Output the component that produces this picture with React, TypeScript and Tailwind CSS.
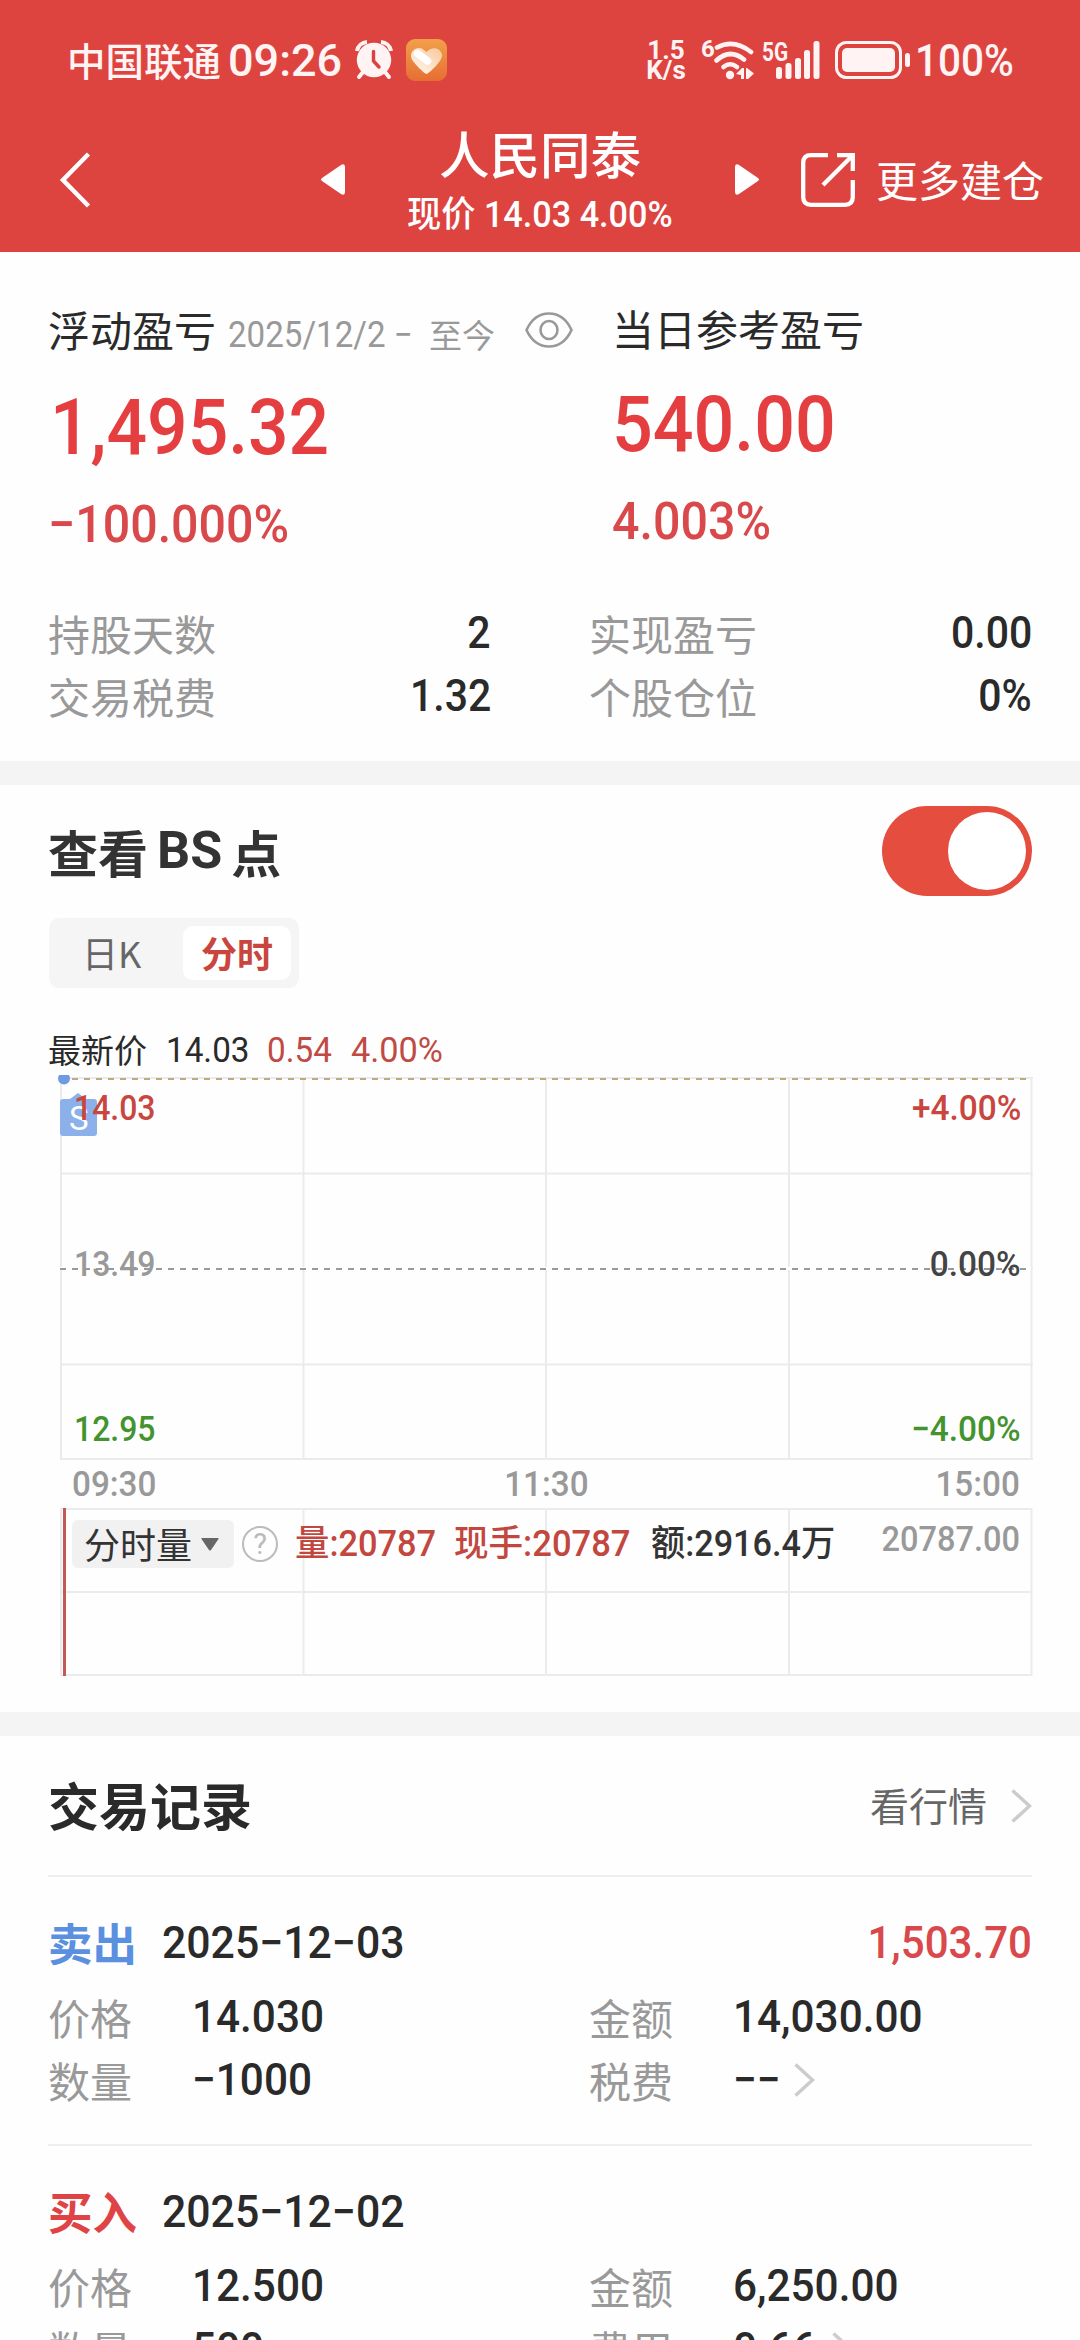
import React from "react";

type TextProps = { children: React.ReactNode; className?: string };

function Num({ children, className = "" }: TextProps) {
  return (
    <span
      className={`whitespace-nowrap font-['Roboto','Noto_Sans_CJK_SC',sans-serif] ${className}`}
    >
      {children}
    </span>
  );
}

function AlarmIcon() {
  return (
    <svg width="38" height="40" viewBox="0 0 38 40" fill="none">
      <path d="M2 11 A11 11 0 0 1 12 2 M36 11 A11 11 0 0 0 26 2" stroke="#fff3f3" strokeWidth="4" />
      <path d="M8 32 L4 37 M30 32 L34 37" stroke="#fff3f3" strokeWidth="4" strokeLinecap="round" />
      <circle cx="19" cy="20" r="17.2" fill="#fff3f3" />
      <path d="M18.5 11.5 V21 L24 27" stroke="#d9443f" strokeWidth="3.4" strokeLinecap="round" />
    </svg>
  );
}

function HeartBadge() {
  return (
    <svg width="41" height="42" viewBox="0 0 41 42">
      <defs>
        <linearGradient id="badge" x1="0" y1="0" x2="0" y2="1">
          <stop offset="0" stopColor="#f2a04a" />
          <stop offset="1" stopColor="#e66e33" />
        </linearGradient>
        <linearGradient id="heart" x1="0.2" y1="1" x2="0.9" y2="0.2">
          <stop offset="0" stopColor="#fff6ec" />
          <stop offset="1" stopColor="#f9cfa6" />
        </linearGradient>
      </defs>
      <rect width="41" height="42" rx="9" fill="url(#badge)" />
      <path
        d="M20.500 35 C19 35 6.500 23.500 5.200 18.500 C3.500 11 12.500 6 18 11 L20.500 13 C26 6.500 35 9 36 16 C36.500 22.500 22 35 20.500 35Z"
        fill="url(#heart)"
      />
      <path d="M11.500 14.500 L21.500 22" stroke="#fff" strokeWidth="7.500" strokeLinecap="round" />
    </svg>
  );
}

function WifiIcon() {
  return (
    <svg width="40" height="40" viewBox="0 0 40 40" fill="none">
      <g stroke="#fff3f3" strokeWidth="4.600" strokeLinecap="round">
        <path d="M3 7.500 Q20 -1.500 37 12" />
        <path d="M2.500 20.500 Q16 8 30 19.500" />
        <path d="M9.500 27 Q16 21.500 23 27" />
      </g>
      <circle cx="16" cy="35" r="4.200" fill="#fff3f3" />
      <path d="M22 34 L28 28 H30 V39 H27 V35Z M33 28 L40 33.500 L34 39 H32 V28Z" fill="#fff3f3" />
    </svg>
  );
}

function SignalIcon() {
  return (
    <svg width="46" height="40" viewBox="0 0 46 40" fill="#fff3f3">
      <rect x="0" y="27" width="6" height="12" rx="2.500" />
      <rect x="9.500" y="23" width="6" height="16" rx="2.500" />
      <rect x="19" y="18" width="6" height="21" rx="2.500" />
      <rect x="28" y="10" width="6" height="29" rx="2.500" />
      <rect x="37.500" y="1" width="6" height="38" rx="2.500" />
    </svg>
  );
}

function BatteryIcon() {
  return (
    <svg width="76" height="38" viewBox="0 0 76 38">
      <rect x="1.500" y="1.500" width="64" height="35" rx="10" fill="none" stroke="#fff3f3" strokeWidth="3" />
      <rect x="7" y="7" width="53" height="24" rx="5" fill="#fff3f3" />
      <rect x="70" y="12" width="5" height="14" rx="2.500" fill="#fff3f3" />
    </svg>
  );
}

function ExportIcon() {
  return (
    <svg width="54" height="54" viewBox="0 0 54 54" fill="none" stroke="#fff" strokeWidth="4.300">
      <path d="M27 2.200 H10 Q2.200 2.200 2.200 10 V44 Q2.200 51.800 10 51.800 H44 Q51.800 51.800 51.800 44 V27" />
      <path d="M36 2.200 H51.800 V18" />
      <path d="M51 3 L22 32" />
    </svg>
  );
}

function EyeIcon() {
  return (
    <svg width="48" height="36" viewBox="0 0 48 36" fill="none" stroke="#999" strokeWidth="2.600">
      <path d="M1.500 18 C7 6 16 1.500 24 1.500 S41 6 46.500 18 C41 30 32 34.500 24 34.500 S7 30 1.500 18Z" />
      <ellipse cx="24" cy="18" rx="8.500" ry="9" />
    </svg>
  );
}

function Chevron() {
  return (
    <svg width="21" height="36" viewBox="0 0 21 36" fill="none" stroke="#ccc" strokeWidth="3.500">
      <path d="M1.500 2.500 L18.500 18 L1.500 33.500" />
    </svg>
  );
}

function Stat({ label, value }: { label: string; value: string }) {
  return (
    <div className="flex h-[63px] items-center justify-between">
      <span className="text-[42px] leading-none text-[#999]">{label}</span>
      <Num className="origin-right scale-x-[.91] text-[45px] leading-none font-medium text-[#2a2a2a]">{value}</Num>
    </div>
  );
}

function Field({ label, value, arrow = false }: { label: string; value: string; arrow?: boolean }) {
  return (
    <div className="flex h-[63px] items-center">
      <span className="w-[144px] shrink-0 text-[42px] leading-none text-[#999]">{label}</span>
      <Num className="origin-left scale-x-[.94] text-[45px] leading-none font-medium text-[#2a2a2a]">{value}</Num>
      {arrow && (
        <span className="ml-[10px]">
          <Chevron />
        </span>
      )}
    </div>
  );
}

type Trade = {
  side: string;
  sideClass: string;
  date: string;
  profit?: string;
  fields: { label: string; value: string; arrow?: boolean }[];
};

const trades: Trade[] = [
  {
    side: "卖出",
    sideClass: "text-[#5b8fe0]",
    date: "2025−12−03",
    profit: "1,503.70",
    fields: [
      { label: "价格", value: "14.030" },
      { label: "金额", value: "14,030.00" },
      { label: "数量", value: "−1000" },
      { label: "税费", value: "−−", arrow: true },
    ],
  },
  {
    side: "买入",
    sideClass: "text-[#e04345]",
    date: "2025−12−02",
    fields: [
      { label: "价格", value: "12.500" },
      { label: "金额", value: "6,250.00" },
      { label: "数量", value: "500" },
      { label: "费用", value: "0.66", arrow: true },
    ],
  },
];

function TradeCard({ trade }: { trade: Trade }) {
  return (
    <article className="mx-12 h-[269px] shrink-0 border-t-2 border-[#eee] pt-[33px]">
      <div className="flex h-[64px] items-center">
        <span className={`w-[114px] text-[44.500px] leading-none font-bold ${trade.sideClass}`}>{trade.side}</span>
        <Num className="origin-left scale-x-[.95] text-[45px] leading-none font-medium text-[#2a2a2a]">{trade.date}</Num>
        {trade.profit && (
          <Num className="ml-auto origin-right scale-x-[.935] text-[45px] leading-none font-medium text-[#d9484a]">
            {trade.profit}
          </Num>
        )}
      </div>
      <div className="mt-[11px] grid grid-cols-[541px_1fr]">
        {trade.fields.map((f) => (
          <Field key={f.label} {...f} />
        ))}
      </div>
    </article>
  );
}

function PriceChart() {
  return (
    <div className="relative h-[384px] w-[972px]">
      <svg className="absolute inset-0" width="974" height="384" viewBox="0 0 974 384">
        <g stroke="#ebebeb" strokeWidth="2">
          <path d="M1 2 H973 M1 97.500 H973 M1 192.500 H973 M1 288.500 H973 M1 383 H973" />
          <path d="M1 1 V384 M243.500 1 V384 M486 1 V384 M729 1 V384 M971.500 1 V384" />
        </g>
        <path d="M0 192.500 H971" stroke="#fff" strokeWidth="3" />
        <path d="M0 193 H968" stroke="#999" strokeWidth="2" strokeDasharray="6 6" />
        <path d="M0 3 H968" stroke="#bfa77f" strokeWidth="2" strokeDasharray="6 6" />
        <path d="M10 23 L18 17 L26 23Z" fill="#8bb0ea" />
        <rect x="0" y="23" width="37" height="37" rx="3" fill="#8bb0ea" />
      </svg>
      <svg className="absolute -top-[1px] -left-[2px]" width="12" height="10" viewBox="0 0 12 10">
        <circle cx="6" cy="3.500" r="6" fill="#6f9be0" />
      </svg>
      <Num className="absolute top-[25px] left-[9px] text-[33px] leading-[35px] text-white">S</Num>
      <div className="absolute inset-0 text-[35.500px] leading-none font-medium">
        <Num className="absolute top-[15px] left-[14px] origin-left scale-x-[.9] text-[#c9463e]">14.03</Num>
        <Num className="absolute top-[15px] right-[11px] origin-right scale-x-[.94] text-[#c9463e]">+4.00%</Num>
        <Num className="absolute top-[171px] left-[14px] origin-left scale-x-[.9] text-[#999]">13.49</Num>
        <Num className="absolute top-[171px] right-[11px] origin-right scale-x-[.94] text-[#444]">0.00%</Num>
        <Num className="absolute top-[336px] left-[14px] origin-left scale-x-[.9] text-[#43942f]">12.95</Num>
        <Num className="absolute top-[336px] right-[11px] origin-right scale-x-[.94] text-[#43942f]">−4.00%</Num>
      </div>
    </div>
  );
}

function VolumeChart() {
  return (
    <div className="relative h-[168px] w-[972px]">
      <svg className="absolute inset-0" width="974" height="168" viewBox="0 0 974 168">
        <g stroke="#ebebeb" strokeWidth="2">
          <path d="M0 1 H972 M0 84 H972 M0 167 H972" />
          <path d="M1 0 V168 M243.500 0 V168 M486 0 V168 M729 0 V168 M971.500 0 V168" />
        </g>
        <path d="M4.500 0 V168" stroke="#c05a54" strokeWidth="3" />
      </svg>
      <div className="absolute inset-x-0 top-[12px] flex h-12 items-center pl-[12px] text-[36px] leading-none font-medium text-[#333]">
        <div className="flex h-12 w-[162px] shrink-0 items-center gap-[9px] rounded-md bg-[#f1f1f1] pl-[12px]">
          <span className="-mt-[3px] text-[36px] font-normal">分时量</span>
          <svg width="18" height="13" viewBox="0 0 18 13" fill="#666">
            <path d="M1 0 H17 Q18 0 17.500 1 L10 12 Q9 13 8 12 L.5 1 Q0 0 1 0Z" />
          </svg>
        </div>
        <span className="ml-[8px] flex size-[36px] shrink-0 items-center justify-center rounded-full border-[2.500px] border-[#bbb]">
          <Num className="text-[29px] font-normal text-[#bbb]">?</Num>
        </span>
        <Num className="ml-[17px] w-[159px] origin-left scale-x-[.955] text-[#c2473f]">量:20787</Num>
        <Num className="w-[197px] origin-left scale-x-[.96] text-[#c2473f]">现手:20787</Num>
        <Num className="origin-left scale-x-[.95]">额:2916.4万</Num>
      </div>
      <Num className="absolute top-[14px] right-[12px] origin-right scale-x-[.93] text-[35px] leading-none font-medium text-[#999]">
        20787.00
      </Num>
    </div>
  );
}

export default function App() {
  return (
    <div className="flex h-[2340px] w-[1080px] flex-col overflow-hidden bg-[#fefefe] font-['Noto_Sans_CJK_SC',sans-serif] text-[#2a2a2a]">
      <header className="h-[252px] shrink-0 bg-[#dd4440] text-white">
        <div className="flex h-[120px] items-center pl-[67px] leading-none text-[#fff3f3]">
          <span className="-mt-[2px] w-[161px] text-[38.500px] font-medium">中国联通</span>
          <Num className="w-[127px] text-[45px] font-medium">09:26</Num>
          <AlarmIcon />
          <span className="ml-[13px]">
            <HeartBadge />
          </span>
          <Num className="ml-[199px] w-[40px] text-center text-[26px] leading-[20px] font-bold">
            1.5
            <br />
            K/s
          </Num>
          <span className="ml-[15px] flex items-start">
            <Num className="-mt-[3px] w-[13px] origin-left text-[24px] font-bold">6</Num>
            <WifiIcon />
          </span>
          <span className="relative ml-[22px] flex">
            <SignalIcon />
            <Num className="absolute -top-[1px] -left-[14px] origin-left scale-x-[.8] text-[26px] font-bold">5G</Num>
          </span>
          <span className="ml-[13px]">
            <BatteryIcon />
          </span>
          <Num className="ml-[4px] origin-left scale-x-[.9] text-[45px] font-medium">100%</Num>
        </div>
        <div className="flex h-[120px] items-center pl-[59px]">
          <svg width="32" height="56" viewBox="0 0 32 56" fill="none" stroke="#fff" strokeWidth="4.500">
            <path d="M29.500 2 L4 28 L29.500 54" />
          </svg>
          <svg className="-mt-[2px] ml-[230px]" width="24" height="31" viewBox="0 0 24 31" fill="#fff">
            <path d="M1 14 L20 1 Q24 -1 24 3 V28 Q24 32 20 30 L1 17 Q-1 15.500 1 14Z" />
          </svg>
          <div className="flex w-[390px] flex-col items-center">
            <span className="mt-[7px] text-[50.500px] leading-[60px] font-medium">人民同泰</span>
            <Num className="mt-[3px] scale-x-[.95] text-[36px] leading-[60px] font-medium">现价 14.03 4.00%</Num>
          </div>
          <svg className="-mt-[2px]" width="24" height="31" viewBox="0 0 24 31" fill="#fff">
            <path d="M23 14 L4 1 Q0 -1 0 3 V28 Q0 32 4 30 L23 17 Q25 15.500 23 14Z" />
          </svg>
          <span className="ml-[42px]">
            <ExportIcon />
          </span>
          <span className="-mt-[2px] ml-[21px] text-[42px] leading-none">更多建仓</span>
        </div>
      </header>

      <section className="h-[509px] shrink-0 px-[48px] pt-[48px]">
        <div className="grid grid-cols-[564px_1fr]">
          <div className="flex flex-col items-start">
            <div className="flex h-[60px] items-center leading-none">
              <span className="-mt-[3px] w-[180px] text-[42px]">浮动盈亏</span>
              <span className="mt-[10px] flex w-[297px] items-center text-[#999]">
                <Num className="w-[201px] origin-left scale-x-[.92] text-[36px]">2025/12/2 −</Num>
                <span className="-mt-[2px] text-[33px]">至今</span>
              </span>
              <EyeIcon />
            </div>
            <Num className="mt-[30px] ml-[2px] origin-left scale-x-[.915] text-[78px] leading-[76px] font-medium text-[#e53e41]">
              1,495.32
            </Num>
            <Num className="mt-[29px] origin-left scale-x-[.93] text-[52px] leading-[60px] font-medium text-[#d9484a]">
              −100.000%
            </Num>
          </div>
          <div className="flex flex-col items-start">
            <div className="flex h-[58px] items-center leading-none">
              <span className="-mt-[3px] text-[42px]">当日参考盈亏</span>
            </div>
            <Num className="mt-[29px] origin-left scale-x-[.92] text-[78px] leading-[76px] font-medium text-[#e53e41]">
              540.00
            </Num>
            <Num className="mt-[29px] origin-left scale-x-[.93] text-[52px] leading-[60px] font-medium text-[#d9484a]">
              4.003%
            </Num>
          </div>
        </div>
        <div className="mt-[46px] grid grid-cols-[443px_443px] justify-between">
          <Stat label="持股天数" value="2" />
          <Stat label="实现盈亏" value="0.00" />
          <Stat label="交易税费" value="1.32" />
          <Stat label="个股仓位" value="0%" />
        </div>
      </section>

      <div className="h-[24px] shrink-0 bg-[#f4f4f4]" />

      <section className="h-[927px] shrink-0">
        <div className="flex h-[132px] items-center justify-between px-[48px]">
          <h2 className="-mt-[1px] flex items-center text-[50px] leading-none font-bold text-[#333]">
            查看
            <span className="mx-[9px] font-['Roboto',sans-serif] text-[52px]">BS</span>点
          </h2>
          <div className="flex h-[90px] w-[150px] items-center justify-end rounded-full bg-[#e54d3f] pr-[6px]">
            <div className="size-[78px] rounded-full bg-white" />
          </div>
        </div>
        <div className="mt-[1px] ml-[49px] flex h-[70px] w-[250px] items-center rounded-[10px] bg-[#f5f5f5] text-[36px] leading-none">
          <span className="-mt-[3px] w-[134px] pl-[33px] text-[#666]">日K</span>
          <span className="flex h-[54px] w-[108px] items-center justify-center rounded-[10px] bg-white pb-[3px] font-bold text-[#c9463e]">
            分时
          </span>
        </div>
        <div className="flex h-[88px] items-end pl-[48px] text-[35px] leading-[50px]">
          <span className="mb-[2px] w-[118px] text-[33px]">最新价</span>
          <Num className="w-[101px] origin-left scale-x-[.95]">14.03</Num>
          <Num className="w-[84px] origin-left scale-x-[.95] text-[#c04a44]">0.54</Num>
          <Num className="origin-left scale-x-[.98] text-[#c04a44]">4.00%</Num>
        </div>
        <div className="pl-[60px]">
          <PriceChart />
          <div className="flex h-[48px] items-center justify-between pt-[1px] pr-[60px] pl-[12px] text-[35px] leading-none text-[#999]">
            <Num className="origin-left scale-x-[.95] font-medium">09:30</Num>
            <Num className="scale-x-[.95] font-medium">11:30</Num>
            <Num className="origin-right scale-x-[.95] font-medium">15:00</Num>
          </div>
          <VolumeChart />
        </div>
      </section>

      <div className="h-[24px] shrink-0 bg-[#f4f4f4]" />

      <section className="flex flex-1 flex-col overflow-hidden">
        <div className="flex h-[139px] shrink-0 items-center justify-between px-[48px]">
          <h2 className="-mt-[2px] text-[51px] leading-none font-bold">交易记录</h2>
          <div className="flex items-center gap-[24px] text-[39px] leading-none text-[#666]">
            <span className="-mt-[2px]">看行情</span>
            <Chevron />
          </div>
        </div>
        {trades.map((t) => (
          <TradeCard key={t.date} trade={t} />
        ))}
      </section>
    </div>
  );
}
